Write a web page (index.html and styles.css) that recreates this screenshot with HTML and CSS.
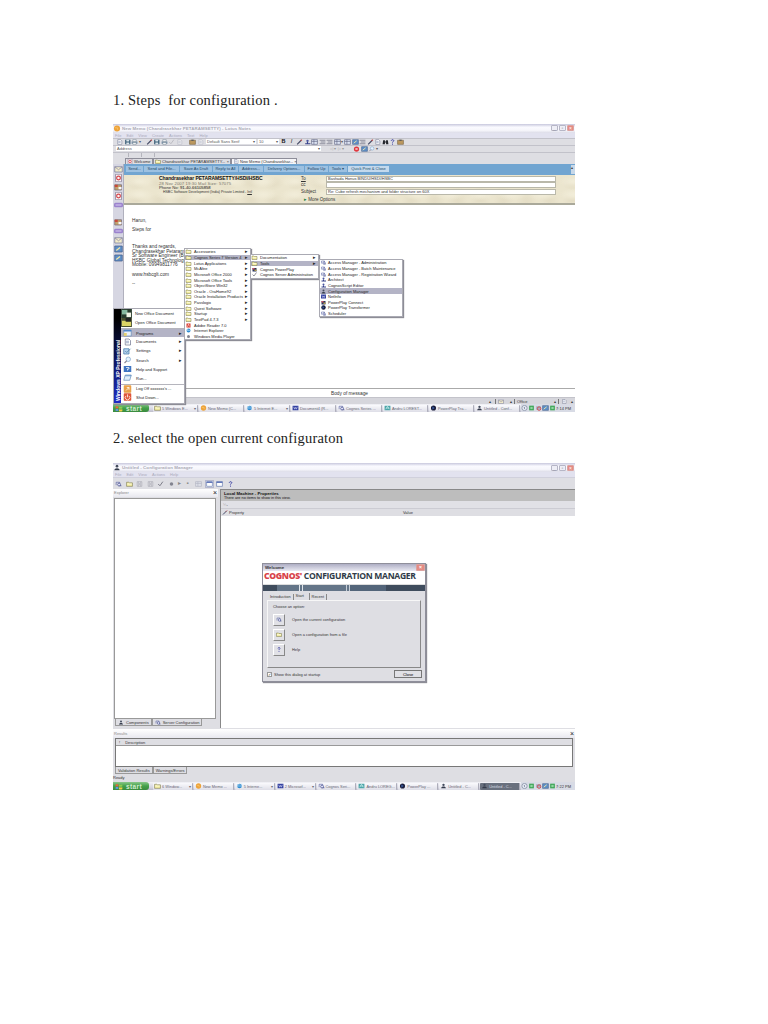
FILE: index.html
```html
<!DOCTYPE html>
<html lang="en">
	<head>
		<meta charset="utf-8">
		<meta name="viewport" content="width=device-width, initial-scale=1.0">
		<title>Steps for configuration</title>
		<link rel="stylesheet" href="styles.css">
	</head>

	<body>
		<svg class="sprite">
			<symbol id="folder" viewBox="0 0 12 10"><path d="M1 2h4l1 1h5v6H1z" fill="#f4eea0" stroke="#77744c"/><path d="M2 5h8" stroke="#fff"/></symbol>
			<symbol id="page" viewBox="0 0 12 10"><path d="M3 1h5l2 2v6H3z" fill="#fff" stroke="#777c96"/><path d="M4 4h4M4 6h4" stroke="#8390b5"/></symbol>
			<symbol id="disk" viewBox="0 0 12 10"><path d="M2 1h9v8H2z" fill="#355a74"/><path d="M4 1h5v3H4zM4 6h5v3H4z" fill="#dce4ea"/></symbol>
			<symbol id="greydisk" viewBox="0 0 12 10"><path d="M2 1h8v8H2zM4 1v3h4V1M4 9V6h4v3" fill="none" stroke="#a9a9b4"/></symbol>
			<symbol id="person" viewBox="0 0 12 10"><circle cx="6" cy="3" r="2" fill="#444c5e"/><path d="M2 9c0-4 8-4 8 0z" fill="#343b4b"/></symbol>
			<symbol id="blueperson" viewBox="0 0 12 10"><circle cx="6" cy="3" r="2" fill="#4a56a0"/><path d="M2 9V7h3V5h2v2h4v2z" fill="#35408a"/></symbol>
			<symbol id="key" viewBox="0 0 12 10"><path d="M2 7V2h6v2" fill="none" stroke="#4b579e"/><circle cx="7" cy="6" r="2.5" fill="#e3e4fa" stroke="#29347b"/><path d="M8 8h3" stroke="#29347b"/></symbol>
			<symbol id="globe" viewBox="0 0 12 10"><circle cx="6" cy="5" r="4" fill="#2e8bd0"/><path d="M3 5h7M1 7c2-5 7-7 10-5" fill="none" stroke="#d3edff"/></symbol>
			<symbol id="orange" viewBox="0 0 12 10"><circle cx="6" cy="5" r="4.6" fill="#eda33a"/><path d="M3 4h4v3" fill="none" stroke="#ffcf7a"/></symbol>
			<symbol id="dark" viewBox="0 0 12 10"><circle cx="6" cy="5" r="4.4" fill="#181b38"/><path d="M4 2l4 3-4 3" fill="#395a9e"/></symbol>
			<symbol id="powerplay" viewBox="0 0 12 10"><path d="M2 2h8v7H2z" fill="#293460"/><path d="M2 2h4v3H2z" fill="#d3525d"/><path d="M6 5h4v3H6z" fill="#b89e48"/></symbol>
			<symbol id="word" viewBox="0 0 12 10"><path d="M1 1h10v8H1z" fill="#3340a0"/><path d="M3 3l1.5 4L6 4l1.5 3L9 3" fill="none" stroke="#e7ebff"/></symbol>
			<symbol id="red" viewBox="0 0 12 10"><path d="M2 1h8v8H2z" fill="#d9382c"/><path d="M4 8l2-6 2 5" fill="none" stroke="#fff"/></symbol>
			<symbol id="help" viewBox="0 0 12 10"><path d="M4 3c0-3 5-2 4 0C8 4 6 4 6 6" fill="none" stroke="#3439a0" stroke-width="1.6"/><circle cx="6" cy="8.5" r="1" fill="#3439a0"/></symbol>
			<symbol id="search" viewBox="0 0 12 10"><circle cx="7" cy="4" r="3" fill="#e4f2ff" stroke="#85a8cd"/><path d="M5 6L2 9" stroke="#8b8593" stroke-width="1.5"/></symbol>
			<symbol id="run" viewBox="0 0 12 10"><path d="M3 1h8l-2 7H1z" fill="#e2eefa" stroke="#6c92ba"/><path d="M3 2h8" stroke="#4f85c4"/></symbol>
			<symbol id="settings" viewBox="0 0 12 10"><path d="M1 2h7v7H1z" fill="#b6d2ee" stroke="#487cae"/><path d="M3 5l2 2 5-5" fill="none" stroke="#44799f"/></symbol>
			<symbol id="helpbox" viewBox="0 0 12 10"><path d="M1 1h10v8H1z" fill="#3f74c2"/><path d="M4 3h4v2H6v2" fill="none" stroke="#fff"/></symbol>
			<symbol id="logoff" viewBox="0 0 12 10"><rect x="1" width="10" height="10" rx="1" fill="#e9a04a"/><path d="M4 7l4-4M5 3h3v3" fill="none" stroke="#fff"/></symbol>
			<symbol id="shutdown" viewBox="0 0 12 10"><rect x="1" width="10" height="10" rx="1" fill="#df5639"/><path d="M4 3.5a3 3 0 1 0 4 0M6 1.5v4" fill="none" stroke="#fff"/></symbol>
			<symbol id="office" viewBox="0 0 12 10"><path d="M0 0h12v10H0z" fill="#283b2d"/><path d="M1 1h6v5H1z" fill="#87b8a0"/><path d="M6 4h5v5H6z" fill="#f3f4e6"/></symbol>
			<symbol id="openoffice" viewBox="0 0 12 10"><path d="M0 0h12v10H0z" fill="#4b5130"/><path d="M1 3h4l1 1h5v5H1z" fill="#dcd465"/><path d="M5 0h6v4H5z" fill="#222"/></symbol>
			<symbol id="programs" viewBox="0 0 12 10"><path d="M1 1h10v8H1z" fill="#e9f1fa" stroke="#6f90b8"/><path d="M1 1h10v2H1z" fill="#4d86cc"/><path d="M1 5h4v4H1z" fill="#e2cf72"/></symbol>
			<symbol id="book" viewBox="0 0 12 10"><path d="M1 2h9v7H1z" fill="#c2a26c" stroke="#786e78"/><path d="M1 2h4v3H1z" fill="#c84a3a"/><path d="M6 5h4v3H6z" fill="#f7f7ff"/></symbol>
			<symbol id="mail" viewBox="0 0 12 10"><path d="M1 2h10v7H1z" fill="#f2ecc9" stroke="#7a7d9c"/><path d="M1 2l5 4 5-4" fill="none" stroke="#8a86a5"/></symbol>
			<symbol id="redpage" viewBox="0 0 12 10"><path d="M2 0h8v10H2z" fill="#fbf4f6" stroke="#8a7f97"/><circle cx="6" cy="5" r="2.5" fill="none" stroke="#d4454a" stroke-width="1.6"/></symbol>
			<symbol id="violet" viewBox="0 0 12 10"><rect y="2" width="12" height="6" rx="2" fill="#9b83cd"/><path d="M2 5h8" stroke="#ede6ff"/></symbol>
			<symbol id="blue" viewBox="0 0 12 10"><path d="M1 1h10v8H1z" fill="#5e8fc8" stroke="#49628b"/><path d="M3 7l5-4" stroke="#f1e7a8" stroke-width="1.6"/></symbol>
			<symbol id="printer" viewBox="0 0 12 10"><path d="M1 4h10v4H1z" fill="#7c94aa"/><path d="M3 1h6v3H3zM3 6h6v3H3z" fill="#fff" stroke="#4e6577" stroke-width=".7"/></symbol>
			<symbol id="paste" viewBox="0 0 12 10"><path d="M1 2h10v7H1z" fill="#bc985e" stroke="#75603c"/><path d="M4 1h4v2H4z" fill="#555"/></symbol>
			<symbol id="pen" viewBox="0 0 12 10"><path d="M2 9l7-7" stroke="#444a66" stroke-width="2"/><path d="M8 3l2-2" stroke="#bd4848" stroke-width="2"/></symbol>
			<symbol id="lines" viewBox="0 0 12 10"><path d="M1 2h10M3 5h8M1 8h10" stroke="#54566a"/></symbol>
			<symbol id="grid" viewBox="0 0 12 10"><path d="M1 1h10v8H1zM1 4h10M5 1v8" fill="#dfe6f4" stroke="#555a7a"/></symbol>
			<symbol id="binoculars" viewBox="0 0 12 10"><path d="M2 2h3v2h2V2h3l1 7H7V6H5v3H1z" fill="#23252b"/></symbol>
			<symbol id="check" viewBox="0 0 12 10"><path d="M2 5l3 3 5-7" fill="none" stroke="#777783" stroke-width="1.6"/></symbol>
			<symbol id="stop" viewBox="0 0 12 10"><circle cx="6" cy="5" r="4.5" fill="#e0373e"/><path d="M4 5h4" stroke="#fff" stroke-width="2"/></symbol>
			<symbol id="green" viewBox="0 0 12 10"><path d="M2 1h8v8H2z" fill="#3ba354"/><path d="M4 3h4v4H4z" fill="#91d7a3"/></symbol>
			<symbol id="teal" viewBox="0 0 12 10"><path d="M1 1h10v8H1z" fill="#4da5a8"/><path d="M3 7l3-5 3 5M4 5h5" fill="none" stroke="#e0fcfa"/></symbol>
			<symbol id="notray" viewBox="0 0 12 10"><path d="M2 2h8v6H2z" fill="#a6aec4"/><circle cx="7" cy="6" r="3" fill="none" stroke="#d33c3c" stroke-width="1.4"/></symbol>
			<symbol id="windows" viewBox="0 0 12 10"><path d="M1 1h10v8H1z" fill="#fff" stroke="#5069a5"/><path d="M1 1h10v2H1z" fill="#4960ae"/></symbol>
			<symbol id="flag" viewBox="0 0 12 10"><path d="M1 2q2-1 4 0v3q-2-1-4 0z" fill="#ef6238"/><path d="M6 2q2 1 5 0v3q-3 1-5 0z" fill="#8ccc51"/><path d="M1 6q2-1 4 0v3q-2-1-4 0z" fill="#6094e5"/><path d="M6 6q2 1 5 0v3q-3 1-5 0z" fill="#f4cf45"/></symbol>
			<symbol id="dot" viewBox="0 0 12 10"><circle cx="6" cy="5" r="3" fill="#82838f"/></symbol>
			<symbol id="chevron" viewBox="0 0 12 10"><circle cx="6" cy="5" r="4.5" fill="#e9edf5" stroke="#69758e"/><path d="M7 3L5 5l2 2" fill="none" stroke="#445171"/></symbol>
		</svg>

		<main>
			<h1>1. Steps&nbsp; for configuration .</h1>

			<section class="screen notes">
				<div class="title">
					<svg><use href="#orange"/></svg><b>New Memo (Chandrasekhar PETARAMSETTY) - Lotus Notes</b>
					<i class="win">_</i><i class="win">▫</i><i class="win close">×</i>
				</div>
				<div class="menubar"><span>File</span><span>Edit</span><span>View</span><span>Create</span><span>Actions</span><span>Text</span><span>Help</span></div>
				<div class="tools">
					<svg><use href="#page"/></svg><svg><use href="#disk"/></svg><svg><use href="#printer"/></svg><em>▾</em><svg class="gap"><use href="#pen"/></svg><svg><use href="#disk"/></svg><svg><use href="#printer"/></svg><svg class="faint"><use href="#check"/></svg><svg class="faint"><use href="#page"/></svg><svg class="paste"><use href="#paste"/></svg><svg class="faint"><use href="#page"/></svg>
					<span class="combo font">Default Sans Serif<em>▾</em></span><span class="combo size">10<em>▾</em></span>
					<b>B</b><b class="italic">I</b><svg><use href="#pen"/></svg><svg><use href="#blueperson"/></svg><svg><use href="#grid"/></svg><svg><use href="#lines"/></svg><svg><use href="#lines"/></svg><svg><use href="#grid"/></svg><em>▾</em><svg><use href="#grid"/></svg><svg><use href="#blue"/></svg><svg><use href="#lines"/></svg><svg><use href="#pen"/></svg><svg><use href="#page"/></svg><svg><use href="#binoculars"/></svg><svg><use href="#help"/></svg><svg><use href="#paste"/></svg>
				</div>
				<div class="tools address">
					<span class="combo">Address<em>▾</em></span><small>◁ ▾ ▷ ▾</small><svg><use href="#stop"/></svg><svg><use href="#blue"/></svg><svg><use href="#search"/></svg><em>▾</em>
				</div>
				<div class="tools blank"><i></i><i></i><i></i></div>
				<div class="tabs">
					<span class="t1"><svg><use href="#redpage"/></svg>Welcome</span>
					<span class="t2"><svg><use href="#folder"/></svg>Chandrasekhar PETARAMSETTY...<em>×</em></span>
					<span class="t3"><svg><use href="#page"/></svg>New Memo (Chandrasekhar...<em>×</em></span>
				</div>
				<div class="work">
					<div class="bookmarks">
						<svg><use href="#mail"/></svg><svg><use href="#redpage"/></svg><svg><use href="#book"/></svg><svg><use href="#redpage"/></svg><svg><use href="#violet"/></svg>
						<svg class="lower"><use href="#book"/></svg><svg><use href="#violet"/></svg><svg><use href="#mail"/></svg><svg><use href="#blue"/></svg><svg><use href="#blue"/></svg>
					</div>
					<div class="memo">
						<div class="actions">
							<span class="a1">Send...</span><span class="a2">Send and File...</span><span class="a3">Save As Draft</span><span class="a4">Reply to All</span><span class="a5">Address...</span><span class="a6">Delivery Options...</span><span class="a7">Follow Up</span><span class="a8">Tools ▾</span><span class="a9">Quick Print &amp; Close</span><i>▴</i>
						</div>
						<div class="letterhead">
							<div class="from">
								<b>Chandrasekhar PETARAMSETTY/HSDI/HSBC</b>
								<span class="sent">28 Nov 2007 19:30 Mail Size: 57075</span>
								<span>Phone No: <s>91-40-66105858</s></span>
								<span class="org">HSBC Software Development (India) Private Limited - <u>Intl</u></span>
							</div>
							<div class="fields">
								<label><u>To</u></label><p>Bashada Honus BINDU/HSDI/HSBC</p>
								<label>cc</label><p></p>
								<label>Subject</label><p>Re: Cube refresh mechanism and folder structure on 60X</p>
								<label class="more"><i>▸</i> More Options</label>
							</div>
						</div>
						<div class="body">
							<p>Harun,</p>
							<p>Steps for</p>
							<p class="sign">Thanks and regards,<br>Chandrasekhar Petaramsetty<br>Sr Software Engineer (BI)<br>HSBC Global Technology<br>Mobile: 09949811776</p>
							<p>www.hsbcglt.com</p>
							<p>--</p>
						</div>
						<div class="end">Body of message</div>
					</div>
				</div>
				<div class="status"><span class="s1">▴</span><span class="s2"><svg><use href="#mail"/></svg>▴</span><span class="s3">Office<em>▴</em></span><span class="s4"><svg><use href="#page"/></svg>▴</span></div>
				<div class="taskbar">
					<strong><svg><use href="#flag"/></svg>start</strong>
					<span><svg><use href="#folder"/></svg>5 Windows E...<em>▾</em></span><span><svg><use href="#orange"/></svg>New Memo (C...</span><span><svg><use href="#globe"/></svg>5 Internet E...<em>▾</em></span><span><svg><use href="#word"/></svg>Document4 (R...</span><span><svg><use href="#key"/></svg>Cognos Series ...</span><span><svg><use href="#teal"/></svg>Andru LOREST...</span><span><svg><use href="#dark"/></svg>PowerPlay Tra...</span><span><svg><use href="#person"/></svg>Untitled - Conf...</span>
					<div class="tray"><svg><use href="#chevron"/></svg><svg><use href="#green"/></svg><svg><use href="#notray"/></svg><svg><use href="#blue"/></svg><svg><use href="#green"/></svg><time>7:14 PM</time></div>
				</div>

				<div class="popup startmenu">
					<div class="band"><span>Windows XP Professional</span></div>
					<ul>
						<li class="o1"><svg><use href="#office"/></svg>New Office Document</li>
						<li class="o1"><svg><use href="#openoffice"/></svg>Open Office Document</li>
						<li class="on rule"><svg><use href="#programs"/></svg>Programs<em>▸</em></li>
						<li><svg><use href="#page"/></svg>Documents<em>▸</em></li>
						<li><svg><use href="#settings"/></svg>Settings<em>▸</em></li>
						<li><svg><use href="#search"/></svg>Search<em>▸</em></li>
						<li><svg><use href="#helpbox"/></svg>Help and Support</li>
						<li><svg><use href="#run"/></svg>Run...</li>
						<li class="rule"><svg><use href="#logoff"/></svg>Log Off xxxxxxx's ...</li>
						<li><svg><use href="#shutdown"/></svg>Shut Down...</li>
					</ul>
				</div>
				<ul class="popup programs">
					<li><svg><use href="#folder"/></svg>Accessories<em>▸</em></li>
					<li class="on"><svg><use href="#folder"/></svg>Cognos Series 7 Version 4<em>▸</em></li>
					<li><svg><use href="#folder"/></svg>Lotus Applications<em>▸</em></li>
					<li><svg><use href="#folder"/></svg>McAfee<em>▸</em></li>
					<li><svg><use href="#folder"/></svg>Microsoft Office 2000<em>▸</em></li>
					<li><svg><use href="#folder"/></svg>Microsoft Office Tools<em>▸</em></li>
					<li><svg><use href="#folder"/></svg>ObjectStore Win32<em>▸</em></li>
					<li><svg><use href="#folder"/></svg>Oracle - OraHome92<em>▸</em></li>
					<li><svg><use href="#folder"/></svg>Oracle Installation Products<em>▸</em></li>
					<li><svg><use href="#folder"/></svg>Passlogix<em>▸</em></li>
					<li><svg><use href="#folder"/></svg>Quest Software<em>▸</em></li>
					<li><svg><use href="#folder"/></svg>Startup<em>▸</em></li>
					<li><svg><use href="#folder"/></svg>TextPad 4.7.3<em>▸</em></li>
					<li><svg><use href="#red"/></svg>Adobe Reader 7.0</li>
					<li><svg><use href="#globe"/></svg>Internet Explorer</li>
					<li><svg><use href="#dot"/></svg>Windows Media Player</li>
				</ul>
				<ul class="popup cognos">
					<li><svg><use href="#folder"/></svg>Documentation<em>▸</em></li>
					<li class="on"><svg><use href="#folder"/></svg>Tools<em>▸</em></li>
					<li><svg><use href="#powerplay"/></svg>Cognos PowerPlay</li>
					<li><svg><use href="#check"/></svg>Cognos Server Administration</li>
				</ul>
				<ul class="popup cogtools">
					<li><svg><use href="#key"/></svg>Access Manager - Administration</li>
					<li><svg><use href="#key"/></svg>Access Manager - Batch Maintenance</li>
					<li><svg><use href="#key"/></svg>Access Manager - Registration Wizard</li>
					<li><svg><use href="#blueperson"/></svg>Architect</li>
					<li><svg><use href="#blueperson"/></svg>CognosScript Editor</li>
					<li class="on"><svg><use href="#person"/></svg>Configuration Manager</li>
					<li><svg><use href="#word"/></svg>NetInfo</li>
					<li><svg><use href="#powerplay"/></svg>PowerPlay Connect</li>
					<li><svg><use href="#dark"/></svg>PowerPlay Transformer</li>
					<li><svg><use href="#key"/></svg>Scheduler</li>
				</ul>
			</section>

			<h1 class="second">2. select the open current configuraton</h1>

			<section class="screen config">
				<div class="title">
					<svg><use href="#person"/></svg><b>Untitled - Configuration Manager</b>
					<i class="win">_</i><i class="win">▫</i><i class="win close">×</i>
				</div>
				<div class="menubar"><span>File</span><span>Edit</span><span>View</span><span>Actions</span><span>Help</span></div>
				<div class="tools">
					<svg><use href="#key"/></svg><svg><use href="#folder"/></svg><svg><use href="#greydisk"/></svg><svg><use href="#greydisk"/></svg><svg><use href="#check"/></svg><svg><use href="#dot"/></svg><small>▸</small><small>▪</small><svg class="faint"><use href="#grid"/></svg><svg class="lit"><use href="#windows"/></svg><svg><use href="#windows"/></svg><svg><use href="#help"/></svg>
				</div>
				<div class="panes">
					<div class="explorer">
						<div class="head">Explorer<i>×</i></div>
						<div class="tree"></div>
						<div class="foot"><span><svg><use href="#person"/></svg>Components</span><span class="front"><svg><use href="#key"/></svg>Server Configuration</span></div>
					</div>
					<div class="props">
						<div class="banner"><b>Local Machine - Properties</b><span>There are no items to show in this view.</span></div>
						<div class="sort">½₂</div>
						<div class="cols"><span><svg><use href="#pen"/></svg>Property</span><span>Value</span></div>
					</div>
				</div>
				<div class="head results">Results<i>×</i></div>
				<div class="list"><p><em>!</em>Description</p></div>
				<div class="foot"><span>Validation Results</span><span class="front">Warnings/Errors</span></div>
				<div class="ready">Ready</div>
				<div class="taskbar">
					<strong><svg><use href="#flag"/></svg>start</strong>
					<span><svg><use href="#folder"/></svg>6 Window...<em>▾</em></span><span><svg><use href="#orange"/></svg>New Memo ...</span><span><svg><use href="#globe"/></svg>5 Interne...<em>▾</em></span><span><svg><use href="#word"/></svg>2 Microsof...<em>▾</em></span><span><svg><use href="#key"/></svg>Cognos Seri...</span><span><svg><use href="#teal"/></svg>Andru LOREG...</span><span><svg><use href="#dark"/></svg>PowerPlay ...</span><span><svg><use href="#person"/></svg>Untitled - C...</span><span class="active"><svg><use href="#person"/></svg>Untitled - C...</span>
					<div class="tray"><svg><use href="#chevron"/></svg><svg><use href="#green"/></svg><svg><use href="#notray"/></svg><svg><use href="#blue"/></svg><svg><use href="#green"/></svg><time>7:22 PM</time></div>
				</div>

				<div class="popup dialog">
					<div class="caption">Welcome<i class="win close">×</i></div>
					<h2><b>COGNOS'</b> CONFIGURATION MANAGER</h2>
					<div class="stripe"></div>
					<div class="dtabs"><span>Introduction</span><span class="front">Start</span><span>Recent</span></div>
					<div class="sheet">
						<p>Choose an option:</p>
						<div><button><svg><use href="#key"/></svg></button>Open the current configuration</div>
						<div><button><svg><use href="#folder"/></svg></button>Open a configuration from a file</div>
						<div><button><svg><use href="#help"/></svg></button>Help</div>
					</div>
					<div class="dfoot"><i>✓</i>Show this dialog at startup<button>Close</button></div>
				</div>
			</section>
		</main>
	</body>
</html>
```
FILE: styles.css
```css
*{
	box-sizing: border-box;
}
body{
	margin: 0;
	background-color: white;
	font-family: "Liberation Sans", sans-serif;
}
main{
	padding: 91px 0 0 113px;
}
h1, h2, p, ul{
	margin: 0;
	padding: 0;
	font-weight: normal;
}
h1{
	height: 33px;
	font: 14.5px/19px "Liberation Serif", serif;
	color: #222;
	letter-spacing: .2px;
	white-space: nowrap;
}
h1.second{
	margin-top: 17px;
	height: 34px;
	letter-spacing: .18px;
}
.sprite{
	position: absolute;
	width: 0;
	height: 0;
}
svg{
	flex: none;
	width: 6px;
	height: 5px;
}
i, em{
	font-style: normal;
}
.screen{
	position: relative;
	display: flex;
	flex-direction: column;
	width: 462px;
	background-color: #dedee3;
	font-size: 4px;
	line-height: 5px;
	color: #333;
	white-space: nowrap;
}
.notes{
	height: 288px;
}
.config{
	height: 327px;
}

/* window frame */
.title{
	display: flex;
	align-items: center;
	gap: 1px;
	height: 9px;
	padding-right: 1px;
	background: linear-gradient(#c8c8dd, #fafaff 35%, #f6f6fb 70%, #dcdce8);
	color: #a9a9b4;
}
.title svg{
	width: 8px;
	height: 7px;
}
.title b{
	margin-right: auto;
	font-size: 4.4px;
	letter-spacing: .08px;
}
.win{
	width: 7px;
	height: 6px;
	border: 1px solid #b6b6c6;
	border-radius: 1px;
	background-color: #eeeef6;
	font-size: 5px;
	line-height: 4px;
	text-align: center;
	color: #8a8a98;
}
.win.close{
	background-color: #e48b84;
	border-color: #dba3a0;
	color: white;
}
.menubar{
	display: flex;
	gap: 5px;
	height: 5px;
	padding-left: 2px;
	background-color: #e2e2ef;
	color: #aaaabb;
}
.tools{
	display: flex;
	align-items: center;
	gap: 1px;
	height: 7px;
	padding-left: 3px;
	border-top: 1px solid #c2c2ca;
	color: #555;
}
.notes .tools svg{
	width: 7px;
	height: 6px;
	margin-right: -.5px;
}
.tools em{
	font-size: 4px;
}
.tools .gap{
	margin-left: 4px;
}
.tools .paste{
	margin-left: 6px;
}
.tools .faint{
	opacity: .35;
}
.tools b{
	width: 7px;
	font-size: 5.5px;
	text-align: center;
	color: #111;
}
.tools b.italic{
	font-style: italic;
	font-weight: normal;
}
.combo{
	display: flex;
	justify-content: space-between;
	height: 5px;
	padding: 0 1px;
	background-color: white;
	line-height: 5px;
}
.font{
	width: 50px;
	margin-left: 2px;
}
.size{
	width: 21px;
	margin-left: 1px;
}
.address .combo{
	width: 205px;
}
.address small{
	width: 30px;
	font-size: 4px;
	text-align: center;
	color: #999;
}
.blank{
	gap: 0;
	height: 6px;
}
.blank i{
	width: 13px;
	height: 4px;
	border-right: 1px solid #b5b5bd;
}
.tabs{
	display: flex;
	height: 6px;
	padding-left: 12px;
}
.tabs span{
	display: flex;
	align-items: center;
	gap: 1px;
	padding: 0 1px;
	border: 1px solid #8e8e99;
	border-bottom: 0;
}
.tabs em{
	margin-left: auto;
}
.tabs .t1{
	width: 28px;
}
.tabs .t2{
	width: 78px;
}
.tabs .t3{
	width: 66px;
	background-color: #f6f6f8;
}

/* memo */
.work{
	display: flex;
	height: 234px;
}
.bookmarks{
	display: flex;
	flex-direction: column;
	align-items: center;
	gap: 1px;
	width: 11px;
	padding-top: 1px;
	border-right: 1px solid #b0b0bd;
	background-color: #d6d6e2;
}
.bookmarks svg{
	width: 9px;
	height: 8px;
}
.bookmarks .lower{
	margin-top: 8px;
}
.memo{
	display: flex;
	flex: 1;
	flex-direction: column;
	background-color: white;
}
.actions{
	display: flex;
	align-items: center;
	height: 11px;
	padding-left: 2px;
	background-color: #71a5d1;
}
.actions span{
	height: 6px;
	margin-right: 1px;
	background-color: #9dc1e1;
	line-height: 6px;
	text-align: center;
	color: #234868;
}
.actions .a1{ width: 17px; }
.actions .a2{ width: 35px; }
.actions .a3{ width: 32px; }
.actions .a4{ width: 25px; }
.actions .a5{ width: 24px; }
.actions .a6{ width: 40px; }
.actions .a7{ width: 23px; }
.actions .a8{ width: 18px; }
.actions .a9{
	width: 41px;
	background-color: #c3d9ed;
}
.actions i{
	width: 4px;
	height: 9px;
	margin-left: auto;
	background-color: #c8d8e8;
}
.letterhead{
	display: flex;
	height: 30px;
	border-bottom: 2px solid #aaa99a;
	background-color: #ebe5ce;
	background-image: radial-gradient(ellipse, #f1ecd8 10%, transparent 65%), radial-gradient(ellipse, #e5dec6 10%, transparent 60%);
	background-size: 31px 13px, 23px 17px;
}
.from{
	width: 177px;
	padding: 1px 0 0 35px;
}
.from b, .from span{
	display: block;
	height: 4.7px;
	line-height: 5px;
}
.from b{
	font-size: 5px;
	letter-spacing: -.1px;
	color: #111;
}
.from span{
	font-size: 4.2px;
}
.from .sent{
	letter-spacing: .14px;
	color: #77756c;
}
.from s{
	text-decoration: none;
	color: #111;
}
.from .org{
	padding-left: 4px;
	font-size: 3.5px;
}
.fields{
	display: grid;
	grid-template-columns: 25px 230px;
	grid-auto-rows: 6px;
	row-gap: .5px;
	padding-top: 1px;
}
.fields p{
	padding-left: 1px;
	border: 1px solid #b9b8aa;
	background-color: white;
	line-height: 4px;
}
.fields label{
	font-size: 4.5px;
}
.fields .more{
	padding: 2px 0 0 3px;
}
.fields .more i{
	color: #238043;
}
.body{
	flex: 1;
	padding: 13px 0 0 8px;
	font-size: 4.8px;
	line-height: 5px;
}
.body p{
	margin-bottom: 4px;
}
.body .sign{
	margin-top: 13px;
	line-height: 4.6px;
}
.end{
	height: 9px;
	border-top: 1px solid #aaa;
	font-size: 4.8px;
	line-height: 9px;
	text-align: center;
}
.status{
	display: flex;
	justify-content: flex-end;
	height: 7px;
	padding-top: 1px;
	border-top: 1px solid #c3c3ca;
	background-color: #d6d6dc;
}
.status span{
	display: flex;
	align-items: center;
	justify-content: space-between;
	padding: 0 2px;
	border-left: 1px solid #777;
}
.status .s1{
	margin-right: 2px;
	border: 0;
}
.status .s2{
	width: 19px;
}
.status .s3{
	width: 44px;
}
.status .s4{
	width: 17px;
}

/* taskbar */
.taskbar{
	display: flex;
	align-items: center;
	height: 8px;
	background: linear-gradient(#f2f2f7, #d3d3df 70%, #bdbdcb);
}
.taskbar strong{
	display: flex;
	align-items: center;
	gap: 3px;
	width: 36px;
	height: 8px;
	margin-right: 4px;
	padding-left: 2px;
	border-radius: 0 3px 3px 0;
	background: linear-gradient(#8ac789, #43a04a 50%, #3a8a3e);
	font-size: 6.5px;
	letter-spacing: .4px;
	color: #d3ecd0;
}
.taskbar strong svg{
	width: 8px;
	height: 7px;
}
.taskbar > span{
	display: flex;
	align-items: center;
	gap: 1px;
	flex: 1;
	height: 7px;
	margin-right: 1px;
	padding-left: 1px;
	border-right: 1px solid #aeaebb;
	border-radius: 1px;
	background: linear-gradient(#fafafd, #dedee7);
	font-size: 3.9px;
	color: #666672;
	overflow: hidden;
}
.taskbar > span svg{
	width: 7px;
	height: 6px;
}
.taskbar em{
	margin: 0 1px 0 auto;
}
.taskbar > .active{
	background: #69707e;
	color: #dadbe2;
}
.tray{
	display: flex;
	align-items: center;
	width: 54px;
	height: 8px;
	background-color: #d8dbe5;
}
.tray svg{
	width: 7px;
	height: 6px;
}
.tray time{
	margin-left: auto;
	padding-right: 4px;
}

/* menus */
.popup{
	position: absolute;
	background-color: white;
	border: 1px solid #aaaab3;
	box-shadow: 1px 1px 1px #8d8d96;
}
.popup li{
	display: flex;
	align-items: center;
	gap: 2px;
	height: 5.65px;
	list-style: none;
	color: #222;
}
.popup li em{
	margin: 0 2px 0 auto;
	font-size: 5px;
}
.popup .on{
	background-color: #b4b4c6;
}
.startmenu{
	display: flex;
	left: 0;
	top: 184px;
	width: 72px;
	height: 96px;
}
.band{
	width: 7px;
	background: linear-gradient(#000 10%, #1d2cc4);
	color: white;
}
.band span{
	display: block;
	padding: 0 1px 0 0;
	height: 92px;
	font-size: 5px;
	font-weight: bold;
	line-height: 6px;
	writing-mode: vertical-rl;
	transform: rotate(180deg);
}
.startmenu ul{
	flex: 1;
}
.startmenu li{
	height: 9.1px;
	gap: 4px;
	padding-left: 2px;
}
.startmenu .o1{
	padding-left: 0;
	gap: 3px;
}
.startmenu .rule{
	margin-top: 1px;
	border-top: 1px solid #b5b5bd;
}
.startmenu svg{
	width: 9px;
	height: 8px;
}
.startmenu .o1 svg{
	width: 11px;
	height: 9px;
}
.programs{
	left: 71px;
	top: 124px;
	width: 67px;
}
.programs svg, .cognos svg, .cogtools svg{
	width: 7px;
}
.cognos{
	left: 137px;
	top: 130px;
	width: 69px;
}
.cogtools{
	left: 206px;
	top: 135px;
	width: 84px;
}
.cogtools li{
	gap: 1px;
}

/* configuration manager */
.config .tools{
	height: 12px;
	padding-left: 2px;
	gap: 3.5px;
	border-top-color: #d0d0dc;
}
.config .tools svg{
	width: 7px;
	height: 6px;
}
.config .tools small{
	width: 5px;
	font-size: 6px;
	color: #888;
}
.config .lit{
	outline: 1px solid #b5b8ce;
	background-color: white;
}
.panes{
	display: flex;
	height: 239px;
}
.explorer{
	flex: none;
	width: 105px;
}
.head{
	height: 8px;
	padding: 1px;
	background: linear-gradient(#fff, #e8e8ef);
	color: #888;
}
.head i{
	float: right;
	font-size: 7px;
	color: #222;
}
.tree{
	height: 221px;
	margin: 1px 2px 0 1px;
	border: 1px solid #999;
	background-color: white;
}
.foot{
	display: flex;
	padding-left: 2px;
}
.foot span{
	display: flex;
	align-items: center;
	gap: 2px;
	height: 7px;
	padding: 0 2px;
	border: 1px solid #999;
	border-top: 0;
}
.props{
	flex: 1;
	margin-left: 2px;
	border-left: 1px solid #888;
	background-color: white;
}
.banner{
	height: 12px;
	padding: 1px 3px;
	border-top: 1px solid #888;
	background-color: #bdbdbd;
}
.banner b, .banner span{
	display: block;
	height: 4.5px;
	line-height: 5px;
	color: #111;
}
.banner b{
	font-size: 4.3px;
}
.banner span{
	font-size: 3.8px;
}
.sort{
	height: 7px;
	padding: 1px 2px;
	background-color: #e1e1e6;
	color: #888;
}
.cols{
	display: flex;
	height: 8px;
	border-top: 1px solid #ccccd3;
	background-color: #dedee3;
}
.cols span{
	display: flex;
	flex: none;
	align-items: center;
	gap: 1px;
	width: 181px;
	padding-left: 1px;
}
.cols span + span{
	width: 170px;
}
.results{
	height: 9px;
	padding-top: 2px;
	margin-top: 1px;
}
.list{
	height: 29px;
	margin: 0 2px;
	border: 1px solid #777;
	background-color: white;
}
.list p{
	display: flex;
	align-items: center;
	gap: 5px;
	height: 7px;
	padding-left: 3px;
	border-bottom: 1px solid #999;
	background-color: #dedee3;
}
.ready{
	flex: 1;
	padding-top: 1px;
}

/* welcome dialog */
.dialog{
	display: flex;
	flex-direction: column;
	left: 149px;
	top: 100px;
	width: 164px;
	height: 119px;
	border-color: #8f8f9b;
	background-color: #dedee3;
	font-size: 3.95px;
}
.caption{
	display: flex;
	justify-content: space-between;
	height: 7px;
	padding-left: 2px;
	background: linear-gradient(#aeaec4, #e9e9f2);
	font-size: 4.4px;
	font-weight: bold;
	line-height: 7px;
}
.caption .win{
	width: 9px;
	height: 7px;
}
.dialog h2{
	height: 13px;
	padding-left: 1px;
	background-color: white;
	font: bold 8.6px/10px "Open Sans", sans-serif;
	letter-spacing: -.33px;
	color: #303b48;
}
.dialog h2 b{
	color: #d8434a;
}
.stripe{
	height: 7px;
	border-top: 1px solid #ddd;
	background: linear-gradient(90deg, #3f4c5d 14px, #647588 14px 36px, #e1e6eb 36px 37px, #647588 37px 39px, #e1e6eb 39px 40px, #647588 40px 83px, #c6ced7 83px 84px, #647588 84px 86px, #c6ced7 86px 87px, #53657a 87px 123px, #3f4c5d 123px);
}
.dtabs{
	display: flex;
	height: 9px;
	padding: 3px 0 0 5px;
}
.dtabs span{
	padding: 0 2px;
	border-right: 1px solid #888;
}
.dtabs .front{
	width: 16px;
	margin-top: -1px;
}
.sheet{
	height: 68px;
	margin: 0 4px;
	padding: 3px 5px;
	border: 1px solid;
	border-color: #f7f7f7 #888 #888 #f7f7f7;
}
.sheet p{
	height: 8px;
}
.sheet div{
	display: flex;
	align-items: center;
	gap: 7px;
	height: 15px;
}
.dialog button{
	display: flex;
	align-items: center;
	justify-content: center;
	width: 12px;
	height: 12px;
	padding: 0;
	border: 1px solid;
	border-color: #fff #888 #888 #fff;
	background-color: #e1e1e6;
	font: 4px "Liberation Sans", sans-serif;
}
.dfoot{
	display: flex;
	align-items: center;
	gap: 2px;
	height: 12px;
	padding: 0 3px 0 4px;
}
.dfoot i{
	width: 5px;
	height: 5px;
	border: 1px solid #999;
	background-color: white;
	line-height: 4px;
}
.dialog .dfoot button{
	width: 28px;
	height: 8px;
	margin-left: auto;
	border-color: #777;
}
```
